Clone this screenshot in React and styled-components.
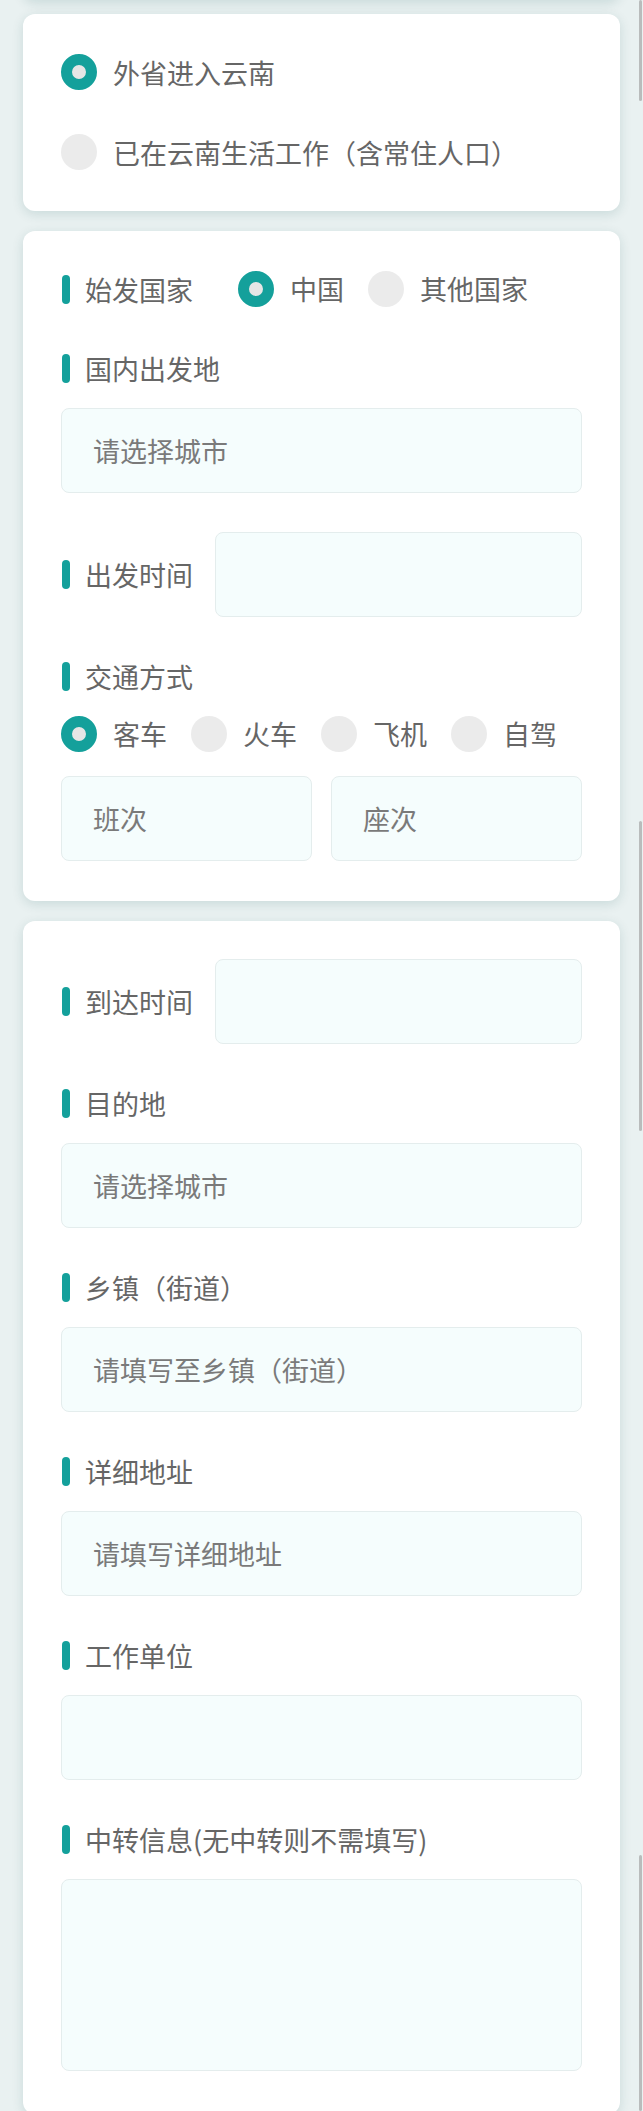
import React, { useState } from 'react';
import styled, { createGlobalStyle } from 'styled-components';

const GlobalStyle = createGlobalStyle`
  * {
    box-sizing: border-box;
  }

  body {
    margin: 0;
    background: #e9f1f1;
    font-family: "Noto Sans CJK SC", "Noto Sans", sans-serif;
    color: #666;
  }
`;

const TEAL = '#14a09b';

const Page = styled.div`
  position: relative;
  display: flex;
  flex-direction: column;
  padding: 0 23px;
`;

const PrevCard = styled.div`
  height: 30px;
  margin-top: -30px;
  background: #fff;
  border-radius: 0 0 12px 12px;
  box-shadow: 0 3px 12px rgba(0, 80, 80, 0.14);
`;

const Card = styled.section`
  background: #fff;
  border-radius: 12px;
  box-shadow: 0 3px 12px rgba(0, 80, 80, 0.14);
  margin-top: ${p => p.$top || '20px'};
  padding: ${p => p.$pad || '38px 38px 40px'};
  display: flex;
  flex-direction: column;
  gap: ${p => p.$gap || '39px'};
`;

const OptionRow = styled.label`
  display: flex;
  align-items: center;
  height: 80px;
  gap: 16px;
  font-size: 27px;
  color: #666;
`;

const RadioDot = styled.span`
  flex: none;
  width: 36px;
  height: 36px;
  border-radius: 50%;
  background: ${p => (p.$checked ? '#e6e6e6' : '#ebebeb')};
  border: ${p => (p.$checked ? `11.5px solid ${TEAL}` : 'none')};
`;

const RadioGroup = styled.div`
  display: flex;
  align-items: center;
  height: 36px;
`;

const RadioOption = styled.label`
  display: flex;
  align-items: center;
  gap: 16px;
  margin-right: 24px;
  font-size: 27px;
  line-height: 36px;
  color: #666;
  cursor: pointer;
  white-space: nowrap;
`;

const Label = styled.div`
  flex: none;
  display: flex;
  align-items: center;
  gap: 15px;
  height: 40px;
  margin-left: 1px;
  margin-right: ${p => p.$after || '0'};
  font-size: 27px;
  color: #666;
  white-space: nowrap;

  &::before {
    content: '';
    flex: none;
    width: 8px;
    height: 29px;
    border-radius: 4px;
    background: ${TEAL};
  }
`;

const Field = styled.div`
  display: flex;
  flex-direction: column;
  gap: ${p => p.$gap || '20px'};
`;

const InlineRow = styled.div`
  display: flex;
  align-items: center;
  gap: ${p => p.$gap || '22px'};
  margin-top: ${p => p.$top || '0'};
`;

const Input = styled.input`
  flex: 1;
  min-width: 0;
  width: 100%;
  height: 85px;
  min-height: 85px;
  padding: 0 31px;
  border: 1px solid #e4eded;
  border-radius: 8px;
  background: #f5fdfd;
  font-family: inherit;
  font-size: 27px;
  color: #555;
  outline: none;

  &::placeholder {
    color: #7a7a7a;
  }
`;

const TextArea = styled.textarea`
  display: block;
  width: 100%;
  height: 192px;
  min-height: 192px;
  padding: 20px 31px;
  border: 1px solid #e4eded;
  border-radius: 8px;
  background: #f5fdfd;
  font-family: inherit;
  font-size: 27px;
  color: #555;
  resize: none;
  outline: none;
`;

const ScrollMark = styled.div`
  position: absolute;
  right: 1px;
  top: ${p => p.$top}px;
  height: ${p => p.$height}px;
  width: 3px;
  border-radius: 2px;
  background: #b9bcbc;
`;

const Radio = ({ checked, label, onSelect }) => (
  <RadioOption onClick={onSelect}>
    <RadioDot $checked={checked} />
    {label}
  </RadioOption>
);

const App = () => {
  const [origin, setOrigin] = useState('out');
  const [country, setCountry] = useState('china');
  const [transport, setTransport] = useState('bus');

  const transports = [
    { key: 'bus', label: '客车' },
    { key: 'train', label: '火车' },
    { key: 'plane', label: '飞机' },
    { key: 'car', label: '自驾' },
  ];

  return (
    <>
      <GlobalStyle />
      <Page>
        <PrevCard />

        <Card $top="14px" $pad="18px 38px 19px" $gap="0">
          <OptionRow onClick={() => setOrigin('out')}>
            <RadioDot $checked={origin === 'out'} />
            外省进入云南
          </OptionRow>
          <OptionRow onClick={() => setOrigin('local')}>
            <RadioDot $checked={origin === 'local'} />
            已在云南生活工作（含常住人口）
          </OptionRow>
        </Card>

        <Card>
          <InlineRow $gap="0">
            <Label $after="45px">始发国家</Label>
            <RadioGroup>
              <Radio checked={country === 'china'} label="中国" onSelect={() => setCountry('china')} />
              <Radio checked={country === 'other'} label="其他国家" onSelect={() => setCountry('other')} />
            </RadioGroup>
          </InlineRow>

          <Field>
            <Label>国内出发地</Label>
            <Input placeholder="请选择城市" readOnly />
          </Field>

          <InlineRow>
            <Label>出发时间</Label>
            <Input />
          </InlineRow>

          <Field>
            <Label>交通方式</Label>
            <RadioGroup>
              {transports.map(t => (
                <Radio
                  key={t.key}
                  checked={transport === t.key}
                  label={t.label}
                  onSelect={() => setTransport(t.key)}
                />
              ))}
            </RadioGroup>
            <InlineRow $gap="19px" $top="4px">
              <Input placeholder="班次" />
              <Input placeholder="座次" />
            </InlineRow>
          </Field>
        </Card>

        <Card $pad="38px 38px 43px">
          <InlineRow>
            <Label>到达时间</Label>
            <Input />
          </InlineRow>

          <Field>
            <Label>目的地</Label>
            <Input placeholder="请选择城市" readOnly />
          </Field>

          <Field>
            <Label>乡镇（街道）</Label>
            <Input placeholder="请填写至乡镇（街道）" />
          </Field>

          <Field>
            <Label>详细地址</Label>
            <Input placeholder="请填写详细地址" />
          </Field>

          <Field>
            <Label>工作单位</Label>
            <Input />
          </Field>

          <Field>
            <Label>中转信息(无中转则不需填写)</Label>
            <TextArea />
          </Field>
        </Card>

        <ScrollMark $top={0} $height={101} />
        <ScrollMark $top={821} $height={310} />
        <ScrollMark $top={1855} $height={256} />
      </Page>
    </>
  );
};

export default App;
